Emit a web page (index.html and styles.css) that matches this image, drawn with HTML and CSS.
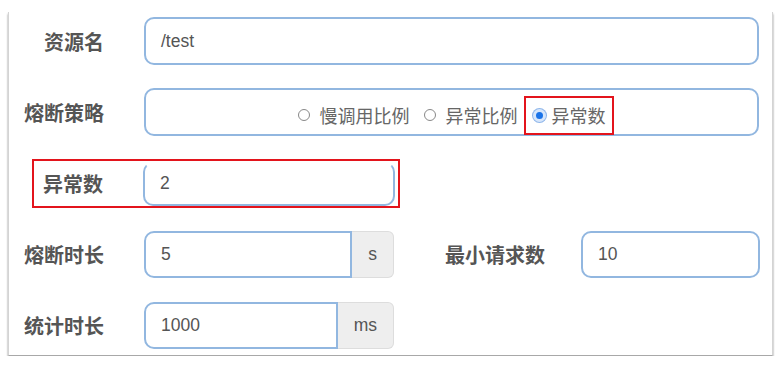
FILE: index.html
```html
<!DOCTYPE html>
<html lang="zh-CN">
<head>
  <meta charset="UTF-8" />
  <meta name="viewport" content="width=device-width, initial-scale=1.0"/>
  <title>降级规则</title>
  <link rel="stylesheet" href="styles.css">
</head>
<body>
  <div class="panel">
    <div class="row">
      <label class="label">资源名</label>
      <div class="field wide">/test</div>
    </div>

    <div class="row">
      <label class="label">熔断策略</label>
      <div class="field wide radios">
        <span class="opt"><i class="dot"></i>慢调用比例</span>
        <span class="opt"><i class="dot"></i>异常比例</span>
        <span class="opt picked"><i class="dot on"></i>异常数</span>
      </div>
    </div>

    <div class="row">
      <div class="mark">
        <label class="label">异常数</label>
        <div class="field short">2</div>
      </div>
    </div>

    <div class="row">
      <label class="label">熔断时长</label>
      <div class="group">
        <div class="field joined">5</div>
        <span class="addon">s</span>
      </div>
      <label class="label second">最小请求数</label>
      <div class="field min">10</div>
    </div>

    <div class="row">
      <label class="label">统计时长</label>
      <div class="group">
        <div class="field joined">1000</div>
        <span class="addon">ms</span>
      </div>
    </div>
  </div>
</body>
</html>
```

FILE: styles.css
```css
body {
  margin: 0;
  background: #fff;
  font-family: "Liberation Sans", "Noto Sans CJK SC", sans-serif;
  color: #555;
}

.panel {
  margin: 12px 0 0 8px;
  width: 763px;
  height: 334px;
  padding: 5px 0 4px;
  background: #fff;
  border-left: 1px solid #d4d4d4;
  border-right: 1px solid #d4d4d4;
  border-bottom: 1px solid #a8a8a8;
  box-shadow: 0 2px 2px rgba(0, 0, 0, 0.45);
  box-sizing: content-box;
}

.row {
  display: flex;
  align-items: center;
  height: 48px;
  margin-bottom: 23px;
  padding-left: 15px;
}

.row:last-child {
  margin-bottom: 0;
}

.label {
  width: 80px;
  text-align: right;
  font-family: "Noto Sans CJK SC", sans-serif;
  font-size: 20px;
  font-weight: bold;
  color: #555;
  flex-shrink: 0;
}

.field {
  height: 48px;
  box-sizing: border-box;
  border: 2px solid #92b7e0;
  border-radius: 10px;
  padding: 0 15px;
  display: flex;
  align-items: center;
  font-size: 17.5px;
  color: #555;
  margin-left: 40px;
}

.wide {
  width: 615px;
}

.radios {
  justify-content: center;
  gap: 14px;
  padding: 6px 0 0 8px;
  font-family: "Noto Sans CJK SC", sans-serif;
  font-size: 18px;
  color: #666;
}

.opt {
  display: inline-flex;
  align-items: center;
  gap: 10px;
  height: 35px;
}

.opt + .opt.picked {
  margin-left: -8px;
}

.picked {
  gap: 6px;
  border: 2px solid #e3141c;
  padding: 0 6px 0 7px;
}

.dot {
  width: 10px;
  height: 10px;
  border: 1px solid #888;
  border-radius: 50%;
  display: inline-block;
  box-sizing: content-box;
}

.dot.on {
  width: 7px;
  height: 7px;
  background: #1a73e8;
  border: 3px solid #d6e6fb;
  box-shadow: 0 0 0 1px #8fb6ea;
}

.mark {
  display: flex;
  align-items: center;
  margin-left: 8px;
  margin-top: 1px;
  width: 368px;
  height: 49px;
  box-sizing: border-box;
  border: 2px solid #e3141c;
}

.mark .label {
  width: 69px;
}

.mark .field {
  width: 252px;
  height: 44px;
  border-top-color: #fff;
}

.group {
  display: flex;
  margin-left: 40px;
  width: 250px;
  height: 47px;
}

.group .field {
  margin-left: 0;
  height: 47px;
  flex: 1;
  border-radius: 10px 0 0 10px;
}

.addon {
  display: flex;
  align-items: center;
  padding: 0 16px;
  background: #eee;
  border: 1px solid #ddd;
  border-left: none;
  border-radius: 0 6px 6px 0;
  font-size: 17.5px;
  color: #555;
}

.second {
  width: 100px;
  margin-left: 51px;
}

.min {
  margin-left: 36px;
  width: 179px;
  height: 47px;
}
```
